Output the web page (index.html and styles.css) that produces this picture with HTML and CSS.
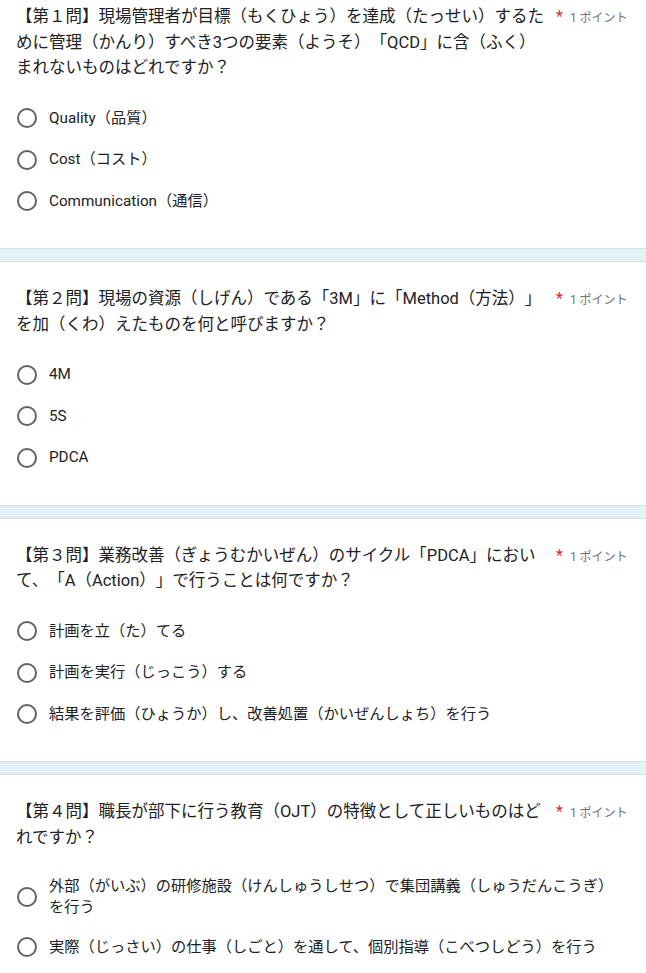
FILE: index.html
```html
<!DOCTYPE html>
<html lang="ja">
<head>
    <meta charset="UTF-8">
    <meta name="viewport" content="width=device-width, initial-scale=1.0">
    <title>職長教育 確認テスト</title>
    <link rel="stylesheet" href="styles.css">
</head>
<body>
    <div class="form">
        <div class="question">
            <div class="qHeader">
                <div class="qTitle">【第１問】現場管理者が目標（もくひょう）を達成（たっせい）するために管理（かんり）すべき3つの要素（ようそ）「QCD」に含（ふく）まれないものはどれですか？</div>
                <div class="qMeta"><span class="req">*</span><span class="points">1 ポイント</span></div>
            </div>
            <div class="options">
                <label class="option"><span class="radio"></span><span class="optionText">Quality（品質）</span></label>
                <label class="option"><span class="radio"></span><span class="optionText">Cost（コスト）</span></label>
                <label class="option"><span class="radio"></span><span class="optionText">Communication（通信）</span></label>
            </div>
        </div>
        <div class="divider"></div>
        <div class="question">
            <div class="qHeader">
                <div class="qTitle">【第２問】現場の資源（しげん）である「3M」に「Method（方法）」を加（くわ）えたものを何と呼びますか？</div>
                <div class="qMeta"><span class="req">*</span><span class="points">1 ポイント</span></div>
            </div>
            <div class="options">
                <label class="option"><span class="radio"></span><span class="optionText">4M</span></label>
                <label class="option"><span class="radio"></span><span class="optionText">5S</span></label>
                <label class="option"><span class="radio"></span><span class="optionText">PDCA</span></label>
            </div>
        </div>
        <div class="divider"></div>
        <div class="question">
            <div class="qHeader">
                <div class="qTitle">【第３問】業務改善（ぎょうむかいぜん）のサイクル「PDCA」において、「A（Action）」で行うことは何ですか？</div>
                <div class="qMeta"><span class="req">*</span><span class="points">1 ポイント</span></div>
            </div>
            <div class="options">
                <label class="option"><span class="radio"></span><span class="optionText">計画を立（た）てる</span></label>
                <label class="option"><span class="radio"></span><span class="optionText">計画を実行（じっこう）する</span></label>
                <label class="option"><span class="radio"></span><span class="optionText">結果を評価（ひょうか）し、改善処置（かいぜんしょち）を行う</span></label>
            </div>
        </div>
        <div class="divider"></div>
        <div class="question">
            <div class="qHeader">
                <div class="qTitle">【第４問】職長が部下に行う教育（OJT）の特徴として正しいものはどれですか？</div>
                <div class="qMeta"><span class="req">*</span><span class="points">1 ポイント</span></div>
            </div>
            <div class="options">
                <label class="option"><span class="radio"></span><span class="optionText">外部（がいぶ）の研修施設（けんしゅうしせつ）で集団講義（しゅうだんこうぎ）を行う</span></label>
                <label class="option"><span class="radio"></span><span class="optionText">実際（じっさい）の仕事（しごと）を通して、個別指導（こべつしどう）を行う</span></label>
            </div>
        </div>
    </div>
</body>
</html>
```

FILE: styles.css
```css
body{
    margin: 0;
    padding: 0;
    background-color: #fff;
    color: #202124;
    font-family: Roboto, "Noto Sans CJK JP", sans-serif;
    overflow: hidden;
    /* keep full width brackets, no punctuation squeeze */
    text-spacing-trim: space-all;
}
.form{
    /* page is scrolled a little */
    margin-top: -20px;
}
.question{
    background-color: #fff;
    padding: 24px 16px 26px 16px;
}
.qHeader{
    display: flex;
    align-items: baseline;
    gap: 4px;
}
.qTitle{
    flex: 1;
    font-size: 16.5px;
    line-height: 25.5px;
}
.qMeta{
    flex: none;
    width: 76px;
    white-space: nowrap;
    display: flex;
    align-items: baseline;
}
.req{
    color: #d93025;
    font-size: 16px;
    margin-left: 2px;
    margin-right: 7px;
}
.points{
    color: #70757a;
    font-size: 12px;
}
.options{
    margin-top: 17px;
}
.option{
    display: flex;
    align-items: center;
    padding: 8.75px 10px 8.75px 0;
    cursor: pointer;
}
.radio{
    flex: none;
    box-sizing: border-box;
    width: 20px;
    height: 20px;
    margin: 2px 12px 2px 1px;
    border: 2px solid #5f6368;
    border-radius: 50%;
}
.optionText{
    flex: 1;
    font-size: 15.25px;
    line-height: 21px;
}
.divider{
    height: 12px;
    background-color: #e1f3f7;
    border-top: 1px solid #dadce0;
    border-bottom: 1px solid #dadce0;
}
```
